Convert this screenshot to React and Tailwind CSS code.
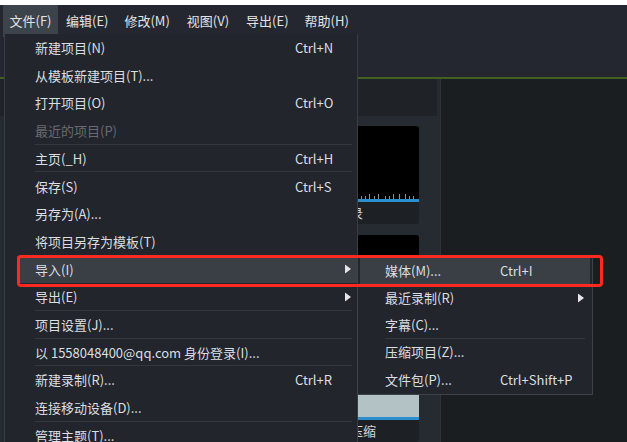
const font = { fontFamily: '"Noto Sans CJK SC", "Noto Sans", sans-serif' };

const mainItems = [
  { label: "新建项目(N)", key: "Ctrl+N" },
  { label: "从模板新建项目(T)..." },
  { label: "打开项目(O)", key: "Ctrl+O" },
  { label: "最近的项目(P)", disabled: true, sep: true },
  { label: "主页(_H)", key: "Ctrl+H", sep: true },
  { label: "保存(S)", key: "Ctrl+S" },
  { label: "另存为(A)..." },
  { label: "将项目另存为模板(T)", sep: true },
  { label: "导入(I)", arrow: true, active: true },
  { label: "导出(E)", arrow: true, sep: true },
  { label: "项目设置(J)...", sep: true },
  { label: "以 1558048400@qq.com 身份登录(I)...", sep: true },
  { label: "新建录制(R)...", key: "Ctrl+R" },
  { label: "连接移动设备(D)...", sep: true },
  { label: "管理主题(T)..." },
];

const subItems = [
  { label: "媒体(M)...", key: "Ctrl+I", active: true },
  { label: "最近录制(R)", arrow: true },
  { label: "字幕(C)...", sep: true },
  { label: "压缩项目(Z)..." },
  { label: "文件包(P)...", key: "Ctrl+Shift+P" },
];

const Arrow = () => (
  <svg width="6" height="9" viewBox="0 0 6 9">
    <path d="M0 0 L6 4.5 L0 9 Z" fill="#e4e6e8" />
  </svg>
);

const MenuRow = ({ item, keyX, h, pad, sepLeft }) => (
  <div className={`${h} relative flex items-center`}>
    {item.active && <div className="absolute inset-y-0 left-0 right-0 bg-[#3a3f46]" />}
    <span
      className={`relative ${pad} text-[13px] whitespace-nowrap ${
        item.disabled ? "text-[#676b71]" : "text-[#dcdee1]"
      }`}
    >
      {item.label}
    </span>
    {item.key && (
      <span className={`absolute ${keyX} text-[13px] text-[#dcdee1] whitespace-nowrap`}>
        {item.key}
      </span>
    )}
    {item.arrow && (
      <span className="absolute right-[6px] top-1/2 -translate-y-1/2 flex">
        <Arrow />
      </span>
    )}
    {item.sep && <div className={`absolute bottom-0 ${sepLeft} right-[5px] h-px bg-[#33373e]`} />}
  </div>
);

const Card = ({ image, caption, wave }) => (
  <div className="w-[140px] h-[98px] rounded-[3px] overflow-hidden bg-[#1d2024] flex flex-col">
    <div className={`h-[73px] ${image} relative`}>
      {wave && (
        <svg className="absolute bottom-0 left-0" width="140" height="6" viewBox="0 0 140 6">
          {[82, 86, 90, 95, 99, 106, 110, 114, 120, 126, 130, 134].map((x) => (
            <rect key={x} x={x} y={x % 3 === 0 ? 1 : 3} width="1" height={x % 3 === 0 ? 5 : 3} fill="#8a8f94" />
          ))}
        </svg>
      )}
    </div>
    <div className="h-[3px] bg-[#2b8fcf]" />
    <div className="flex-1 flex items-center pl-[6px] text-[13px] text-[#d3d6d9] whitespace-nowrap">
      {caption}
    </div>
  </div>
);

export default function App() {
  return (
    <div className="relative w-[627px] h-[442px] overflow-hidden bg-white" style={font}>
      <div className="h-[5px] bg-white" />
      <div className="h-[72px] bg-[#24272f]">
        <div className="h-[32px] flex items-center pl-[3px] text-[13px] text-[#e2e4e6]">
          <div className="h-full w-[55px] flex items-center justify-center bg-[#3c434b]">文件(F)</div>
          <div className="ml-[8px]">编辑(E)</div>
          <div className="ml-[16px]">修改(M)</div>
          <div className="ml-[17px]">视图(V)</div>
          <div className="ml-[17px]">导出(E)</div>
          <div className="ml-[16px]">帮助(H)</div>
        </div>
      </div>
      <div className="h-[2px] bg-[#42601f]" />
      <div className="flex h-[363px]">
        <div className="w-[440px] bg-[#262a31] flex flex-col">
          <div className="h-[39px] mr-[3px] bg-[#1f2328]" />
          <div className="flex flex-col items-end gap-[11px] pt-[10px] pr-[21px]">
            <Card image="bg-black" caption="屏幕录像记录" wave />
            <Card image="bg-black" caption="新建录制" />
            <Card image="bg-[#b3c2c5]" caption="项目文件已压缩" />
          </div>
        </div>
        <div className="flex-1 bg-[#1b1e21] border-l border-[#30343a]" />
      </div>

      {/* main menu */}
      <div className="absolute left-[4px] top-[34px] w-[354px] h-[420px] bg-[#22252c] border-x border-[#393d44] pl-[12px]">
        {mainItems.map((it) => (
          <MenuRow key={it.label} item={it} keyX="left-[278px]" h="h-[27.7px]" pad="pl-[18px]" sepLeft="left-[18px]" />
        ))}
      </div>

      {/* submenu */}
      <div className="absolute left-[357px] top-[255px] w-[236px] bg-[#22252c] border border-[#3d4148] px-[2px] py-px">
        {subItems.map((it) => (
          <MenuRow key={it.label} item={it} keyX="left-[140px]" h="h-[27.2px]" pad="pl-[25px]" sepLeft="left-[25px]" />
        ))}
      </div>

      {/* annotation */}
      <div className="absolute left-[17px] top-[255px] w-[586px] h-[32px] border-[3px] border-[#ff2a1f] rounded-[4px]" />
    </div>
  );
}
